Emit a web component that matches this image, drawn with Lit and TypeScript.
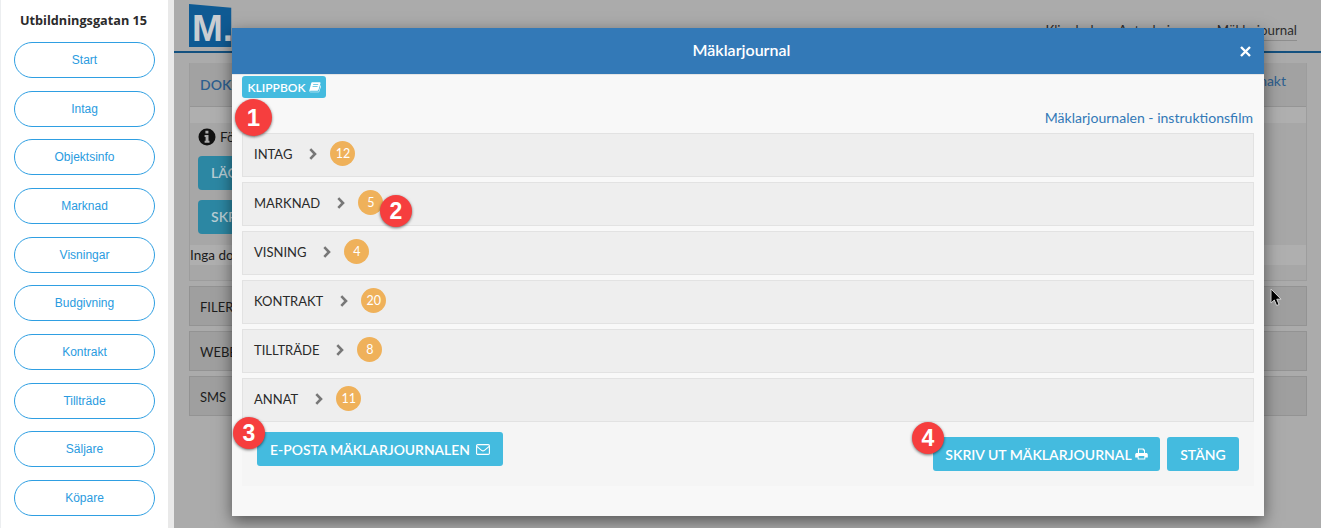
import { LitElement, html, css, svg } from "lit";
import { customElement } from "lit/decorators.js";

const NAV = ["Start","Intag","Objektsinfo","Marknad","Visningar","Budgivning","Kontrakt","Tillträde","Säljare","Köpare"];
const ROWS: [string,number][] = [["INTAG",12],["MARKNAD",5],["VISNING",4],["KONTRAKT",20],["TILLTRÄDE",8],["ANNAT",11]];

const bookIcon = svg`<svg class="ic" width="12" height="12" viewBox="0 0 12 12"><path d="M3.2 1.2h7.6c.6 0 .9.5.7 1l-2 6.6c-.2.6-.6.9-1.200.9H1.600c-.8 0-1.100.5-.6.9.2.2.4.2.8.2h7.300c.4 0 .7-.2.8-.6l1.700-6c.6.2.7.6.5 1.100L10.300 10.400c-.2.6-.6.9-1.200.9H1.900C.9 11.300.2 10.500.4 9.300L2.200 2.200c.1-.6.5-1 1-1zM4.300 3.200l-.2.8h5l.2-.8zM3.700 5l-.2.8h5l.2-.8z" fill="#fff" fill-rule="evenodd"/></svg>`;
const mailIcon = svg`<svg class="ic" width="14" height="11" viewBox="0 0 14 11" fill="none" stroke="#fff" stroke-width="1.100"><rect x=".6" y=".6" width="12.800" height="9.800" rx="1.200"/><path d="M.8 2.400 5.600 6.300c.8.700 2 .7 2.800 0L13.200 2.400"/></svg>`;
const printIcon = svg`<svg class="ic" width="13" height="12" viewBox="0 0 13 12"><path fill="#fff" fill-rule="evenodd" d="M3 .5h5.500L10 2v3h1.200c.9 0 1.600.7 1.600 1.500V9.500H10.300V11.500H2.700V9.500H.2V6.500C.2 5.700.9 5 1.800 5H3zM4 1.500V5H9V2.600H7.800V1.500zM3.700 8V10.500H9.300V8z"/></svg>`;
const chevron = svg`<svg class="chev" width="8" height="12" viewBox="0 0 8 12" fill="none" stroke="#777" stroke-width="2.600"><path d="M1.300 1.200 6 6 1.300 10.800"/></svg>`;
const closeIcon = svg`<svg width="11" height="11" viewBox="0 0 11 11" fill="none" stroke="#fff" stroke-width="2.400"><path d="M1 1 10 10M10 1 1 10"/></svg>`;
const infoIcon = svg`<svg width="18" height="18" viewBox="0 0 18 18"><circle cx="9" cy="9" r="8.500" fill="#111"/><path fill="#aaa" d="M7.400 2.800h3v2.600h-3zM6.600 7h3.900v5.800h1v2H6.600v-2h1V9h-1z"/></svg>`;
const cursor = svg`<svg width="13" height="19" viewBox="0 0 13 19"><path d="M1 1v14l3.300-3 2.300 5.500 2.500-1-2.300-5.300H11z" fill="#000" stroke="#ddd" stroke-width="1"/></svg>`;

@customElement("app-root")
export class AppRoot extends LitElement {
  static styles = css`
    :host { display: block; width: 1321px; height: 528px; overflow: hidden; position: relative; font-family: Lato, sans-serif; }
    .page { display: flex; height: 528px; }
    .side { width: 168px; flex: none; box-sizing: border-box; background: #fff; border-left: 1px solid #eceef0; padding: 12px 0 0 13px; }
    .side h2 { margin: 0 0 13px; width: 139px; text-align: center; font: 700 12.700px/17px "Open Sans", sans-serif; color: #2b2b2b; white-space: nowrap; }
    .side nav { display: flex; flex-direction: column; gap: 12.670px; }
    .pill { width: 141px; height: 36px; box-sizing: border-box; border: 1px solid #2f9fe2; border-radius: 18px; display: flex; align-items: center; justify-content: center; font: 12px "Liberation Sans", sans-serif; color: #2a9be0; }
    .rule { width: 6px; flex: none; background: #e9e9e9; }
    .bg { flex: 1; background: #ababab; min-width: 0; display: flex; flex-direction: column; }
    .top { height: 51px; flex: none; border-bottom: 2px solid #14517f; padding-left: 15px; display: flex; justify-content: space-between; }
    .logo { width: 48px; height: 43px; margin-top: 4px; background: #0f5a93; color: #c9cdd1; font: 700 37px/43px "Liberation Sans", sans-serif; clip-path: polygon(0 0, 88% 9%, 88% 100%, 0 100%); padding: 3px 0 0 3px; box-sizing: border-box; white-space: nowrap; }
    .links { display: flex; gap: 21px; padding: 20px 24px 0 0; font-size: 13.300px; line-height: 20px; color: #2d2d2d; }
    .links span:last-child { height: 20px; border-bottom: 1px solid #8e8e8e; }
    .content { margin: 10px 14px 0 15px; display: flex; flex-direction: column; gap: 5px; }
    .panel { height: 218px; box-sizing: border-box; border: 1px solid #9d9d9d; border-top: 0; background: #a7a7a7; color: #1c1c1c; font-size: 13.500px; }
    .ph { height: 44px; box-sizing: border-box; background: #a2a2a2; border-bottom: 1px solid #959595; padding: 0 20px 0 10px; display: flex; justify-content: space-between; align-items: center; color: #2d5f8f; font-weight: 600; font-size: 14px; }
    .ph span:last-child { font-weight: 400; margin-top: -8px; }
    .band { height: 16px; background: #afafaf; }
    .pb { height: 122px; padding: 5px 8px 0; box-sizing: border-box; }
    .info { display: flex; align-items: center; gap: 4px; height: 18px; }
    .tb { width: 60px; height: 34px; margin-top: 10px; border-radius: 4px; background: #2c87a3; color: #b8cdd4; font-weight: 600; font-size: 14px; line-height: 34px; padding-left: 13px; box-sizing: border-box; }
    .none { height: 20px; background: #afafaf; line-height: 20px; }
    .frow { height: 40px; box-sizing: border-box; border: 1px solid #939393; background: #9f9f9f; padding-left: 10px; line-height: 40px; font-size: 13px; color: #1c1c1c; }
    .modal { position: absolute; left: 232px; top: 28px; width: 1032px; height: 488px; background: #f8f8f8; box-shadow: 0 5px 15px rgba(0,0,0,.5); display: flex; flex-direction: column; }
    .mh { flex: none; background: #3379b7; position: relative; display: flex; align-items: center; justify-content: center; color: #fff; font-weight: 600; font-size: 16px; border-bottom: 1px solid #e5e5e5; box-sizing: border-box; padding: 0 13px 4px 0; height: 47px; }
    .close { position: absolute; right: 13px; top: 18px; display: flex; }
    .mb { flex: 1; padding: 1px 10px 0; display: flex; flex-direction: column; }
    .clip { align-self: flex-start; height: 22px; width: 84px; box-sizing: border-box; background: #44bbdf; border-radius: 3px; color: #fff; font-size: 12px; font-weight: 600; display: flex; align-items: center; justify-content: center; gap: 3px; }
    .lnk { height: 35px; box-sizing: border-box; padding: 4px 1px 0 0; display: flex; align-items: center; justify-content: flex-end; color: #3379b7; font-size: 14.050px; }
    .rows { display: flex; flex-direction: column; gap: 5px; }
    .row { height: 44px; box-sizing: border-box; background: #eee; border: 1px solid #e2e2e2; display: flex; align-items: center; padding: 0 0 3px 11px; font-size: 13px; color: #2a2a2a; }
    .chev { margin-left: 17px; }
    .num { margin-left: 13px; width: 25px; height: 25px; border-radius: 50%; background: #efb15a; color: #fff; font-size: 12.500px; display: flex; align-items: center; justify-content: center; }
    .foot { height: 64px; background: #f5f5f5; padding: 10px 15px 0; box-sizing: border-box; display: flex; justify-content: space-between; align-items: flex-start; }
    .btn { height: 34px; box-sizing: border-box; border-radius: 3px; background: #44bbdf; color: #fff; font-size: 14px; font-weight: 600; display: flex; align-items: center; justify-content: center; white-space: nowrap; }
    .b1 { width: 246px; gap: 6px; font-size: 13.900px; }
    .right { display: flex; gap: 7px; margin-top: 5px; }
    .b2 { width: 227px; gap: 3px; }
    .b3 { width: 72px; }
    .mark { position: absolute; border-radius: 50%; background: #f63e3e; color: #fff; font: 700 20px "Liberation Sans", sans-serif; display: flex; align-items: center; justify-content: center; box-shadow: 0 1px 3px rgba(0,0,0,.55); width: 32px; height: 32px; }
    .m1 { left: 235px; top: 99px; width: 37px; height: 37px; font-size: 24px; }
    .m2 { left: 380px; top: 195px; font-size: 23px; }
    .m3 { left: 233px; top: 417px; font-size: 23px; }
    .m4 { left: 912px; top: 422px; font-size: 23px; }
    .cur { position: absolute; left: 1270px; top: 288px; display: flex; }
  `;

  render() {
    return html`
      <div class="page">
        <aside class="side">
          <h2>Utbildningsgatan 15</h2>
          <nav>${NAV.map(n => html`<div class="pill">${n}</div>`)}</nav>
        </aside>
        <div class="rule"></div>
        <main class="bg">
          <div class="top">
            <div class="logo">M.</div>
            <div class="links"><span>Klippbok</span><span>Anteckningar</span><span>Mäklarjournal</span></div>
          </div>
          <div class="content">
            <section class="panel">
              <div class="ph"><span>DOKUMENT</span><span>Fullmakt</span></div>
              <div class="band"></div>
              <div class="pb">
                <div class="info">${infoIcon}<span>För</span></div>
                <div class="tb">LÄGG</div>
                <div class="tb">SKRIV</div>
              </div>
              <div class="none">Inga dokument</div>
            </section>
            <div class="frow">FILER</div>
            <div class="frow">WEBB</div>
            <div class="frow">SMS</div>
          </div>
        </main>
      </div>
      <div class="cur">${cursor}</div>
      <div class="modal">
        <header class="mh">Mäklarjournal<span class="close">${closeIcon}</span></header>
        <div class="mb">
          <div class="clip">KLIPPBOK ${bookIcon}</div>
          <div class="lnk">Mäklarjournalen - instruktionsfilm</div>
          <div class="rows">
            ${ROWS.map(([t,n]) => html`<div class="row">${t}${chevron}<span class="num">${n}</span></div>`)}
          </div>
          <div class="foot">
            <div class="btn b1">E-POSTA MÄKLARJOURNALEN ${mailIcon}</div>
            <div class="right">
              <div class="btn b2">SKRIV UT MÄKLARJOURNAL ${printIcon}</div>
              <div class="btn b3">STÄNG</div>
            </div>
          </div>
        </div>
      </div>
      <div class="mark m1">1</div>
      <div class="mark m2">2</div>
      <div class="mark m3">3</div>
      <div class="mark m4">4</div>
    `;
  }
}
